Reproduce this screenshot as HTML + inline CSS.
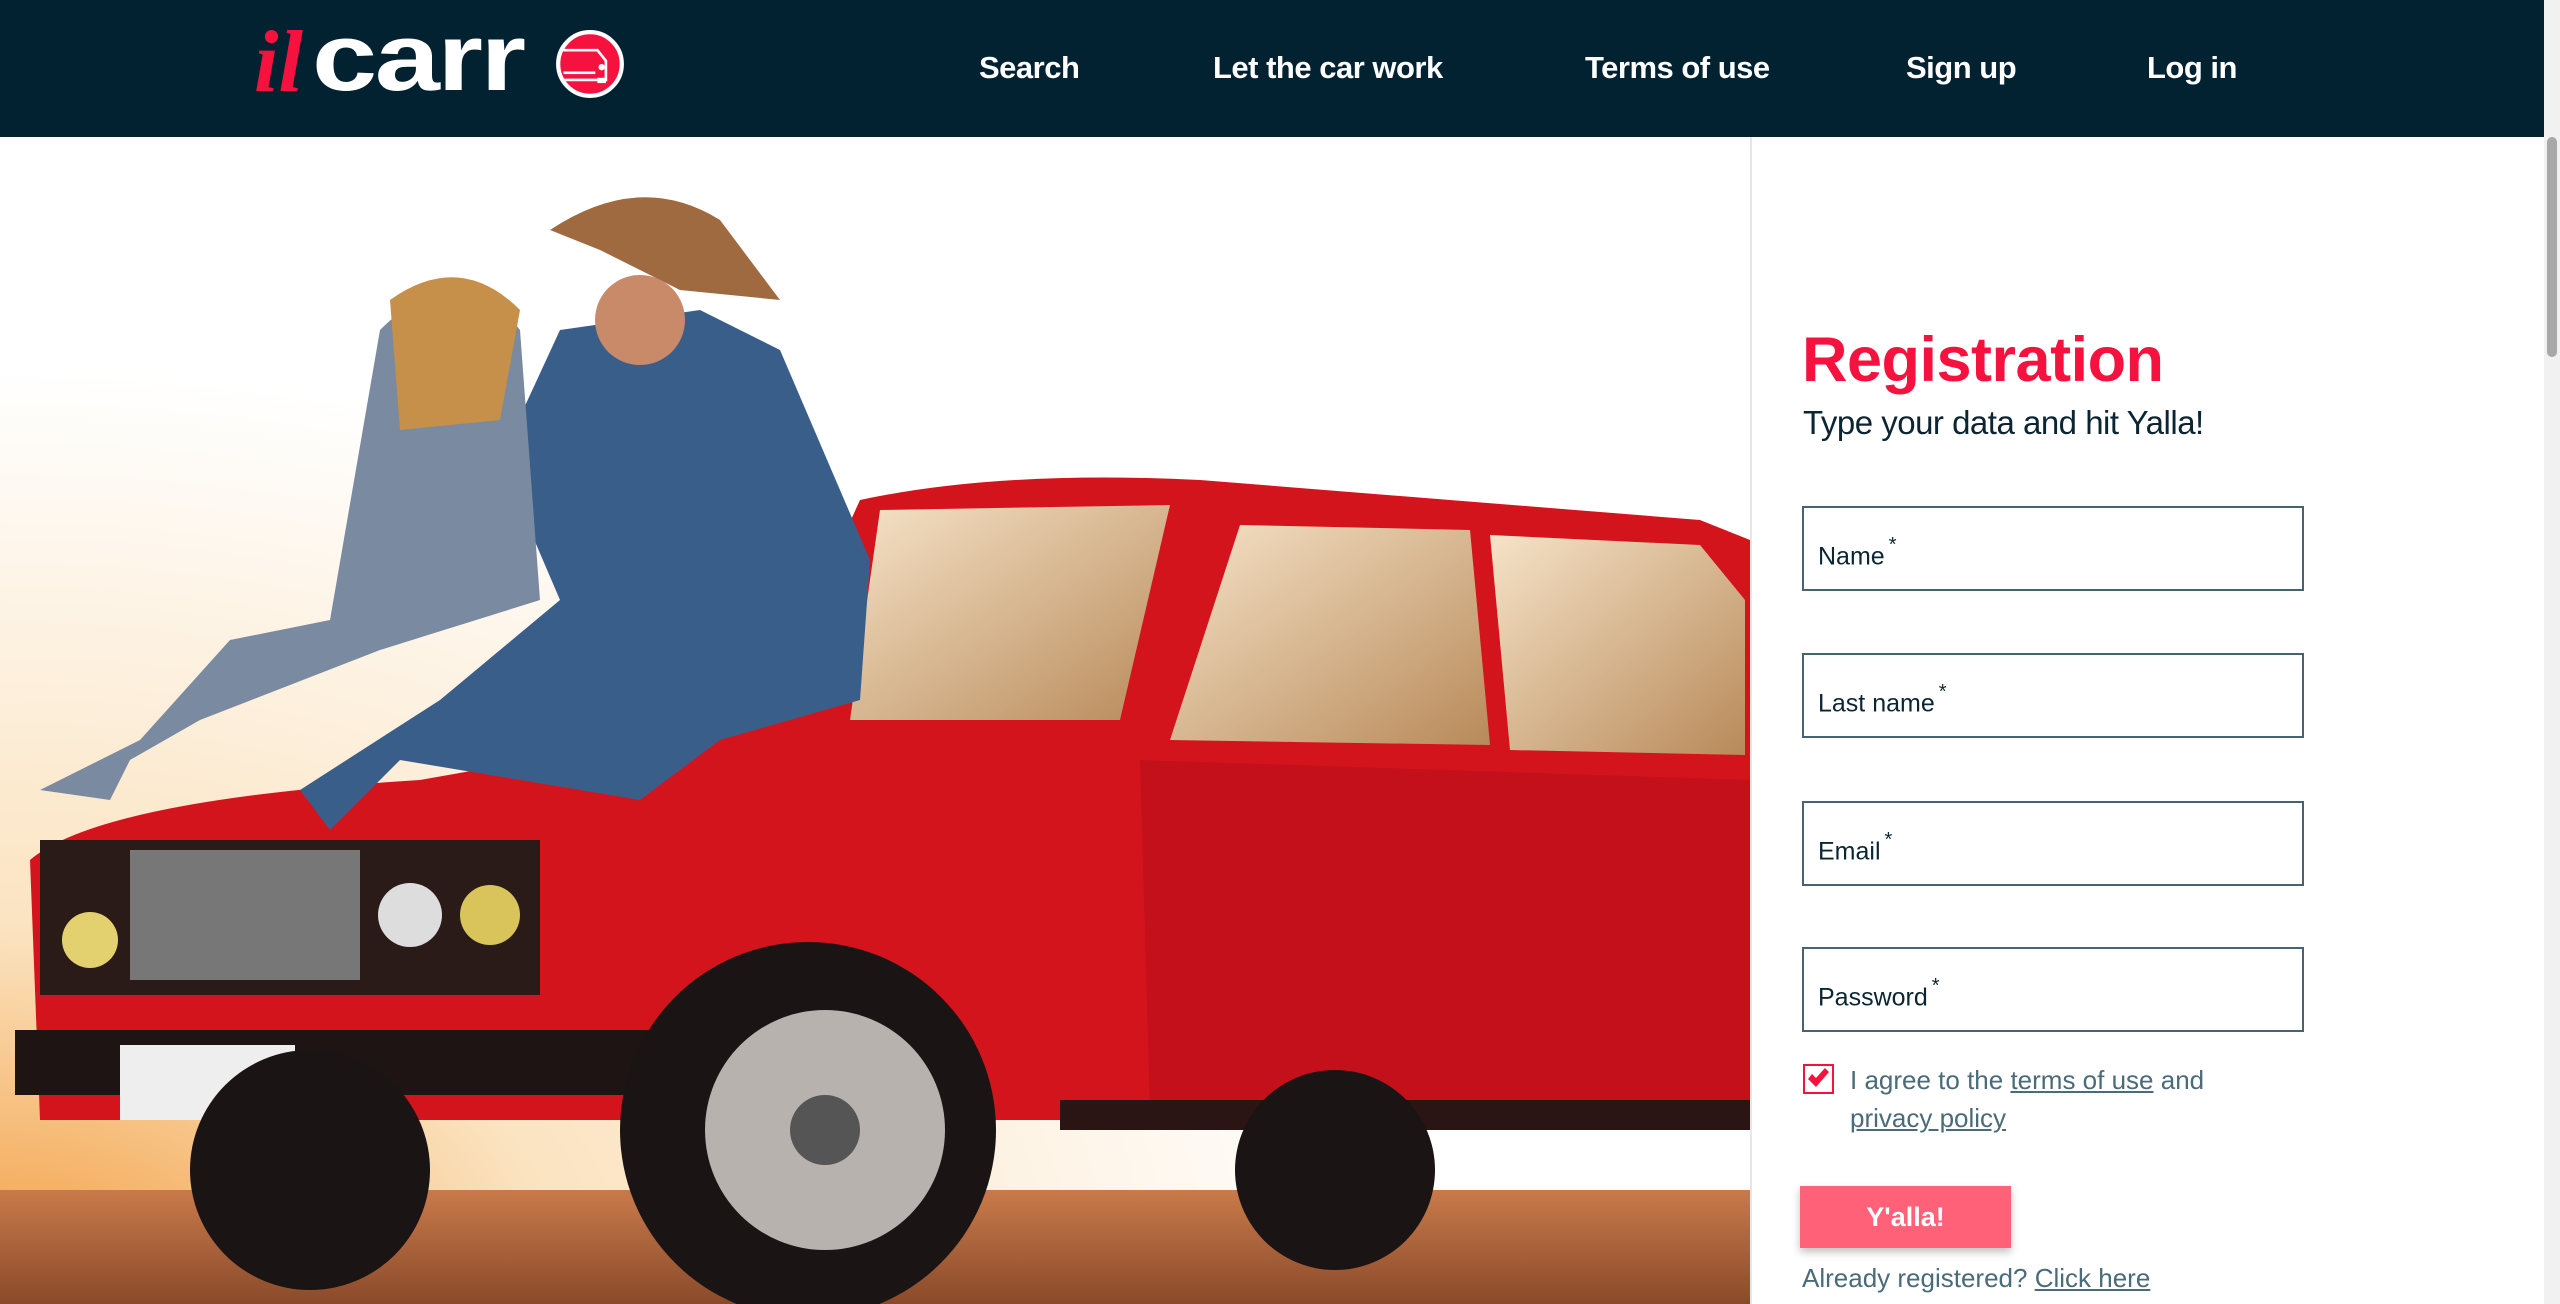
<!DOCTYPE html>
<html><head><meta charset="utf-8"><style>
*{margin:0;padding:0;box-sizing:border-box}
body{width:2560px;height:1304px;overflow:hidden;background:#fff;font-family:"Liberation Sans",sans-serif;position:relative}
.hdr{position:absolute;left:0;top:0;width:2544px;height:137px;background:#022232}
.nav{position:absolute;top:50px;color:#fff;font-size:31px;font-weight:bold;letter-spacing:-0.5px}
.photo{position:absolute;left:0;top:137px;width:1750px;height:1167px;overflow:hidden}
.vline{position:absolute;left:1750px;top:137px;width:2px;height:1167px;background:#e6e6e6}
.sb{position:absolute;left:2544px;top:0;width:16px;height:1304px;background:#f1f1f1}
.sbt{position:absolute;left:2547px;top:137px;width:10px;height:220px;background:#a8a8a8;border-radius:5px}
h1{position:absolute;left:1802px;top:324px;font-size:63px;color:#f5123f;font-weight:bold;letter-spacing:-0.5px}
.sub{position:absolute;left:1803px;top:404px;font-size:33px;color:#0b2532;letter-spacing:-0.5px}
.inp{position:absolute;left:1802px;width:502px;height:85px;border:2px solid #46636f}
.inp span{position:absolute;left:14px;bottom:18px;font-size:25px;color:#0b2532}
.inp sup{font-size:20px;position:relative;top:-4px;margin-left:4px}
.cb{position:absolute;left:1803px;top:1064px;width:31px;height:30px;border:2px solid #f5123f}
.txt{position:absolute;left:1850px;font-size:26px;color:#4a6b78}
.txt u{color:#4a6b78}
.btn{position:absolute;left:1800px;top:1186px;width:211px;height:62px;background:#ff6179;color:#fff;font-weight:bold;font-size:27px;text-align:center;line-height:62px;box-shadow:0 4px 8px rgba(0,0,0,.25)}
</style></head><body>
<div class="hdr">
<div style="position:absolute;left:254px;top:19px;line-height:1;font-family:'Liberation Serif',serif;font-style:italic;font-weight:bold;color:#f5123f;font-size:88px">il</div>
<div style="position:absolute;left:312px;top:10px;line-height:1;color:#fff;font-size:96px;font-weight:bold;letter-spacing:-2px;transform:scaleX(1.22);transform-origin:0 0">carr</div>
<svg style="position:absolute;left:555px;top:29px" width="70" height="70" viewBox="0 0 66 66"><circle cx="33" cy="33" r="30" fill="#f5123f" stroke="#fff" stroke-width="4"/><path d="M8 20h32l8 10v18H8" fill="none" stroke="#fff" stroke-width="2.5"/><rect x="8" y="40" width="30" height="2.5" fill="#fff"/><circle cx="44" cy="36" r="3" fill="#fff"/><rect x="40" y="46" width="8" height="5" fill="#fff"/></svg>
<div class="nav" style="left:979px">Search</div>
<div class="nav" style="left:1213px">Let the car work</div>
<div class="nav" style="left:1585px">Terms of use</div>
<div class="nav" style="left:1906px">Sign up</div>
<div class="nav" style="left:2147px">Log in</div>
</div>
<div class="photo">
<svg width="1750" height="1167" viewBox="0 137 1750 1167">
<defs>
<radialGradient id="glow" cx="0" cy="1" r="0.8"><stop offset="0" stop-color="#f29a3a"/><stop offset="0.4" stop-color="#fbe3c0"/><stop offset="1" stop-color="#ffffff"/></radialGradient>
<linearGradient id="gr" x1="0" y1="0" x2="0" y2="1"><stop offset="0" stop-color="#c97a4a"/><stop offset="1" stop-color="#8a4a2a"/></linearGradient>
<linearGradient id="win" x1="0" y1="0" x2="1" y2="1"><stop offset="0" stop-color="#f6e3c8"/><stop offset="1" stop-color="#b88a5a"/></linearGradient>
</defs>
<rect x="0" y="137" width="1750" height="1167" fill="url(#glow)"/>
<rect x="0" y="1190" width="1750" height="114" fill="url(#gr)"/>
<path d="M860 500 Q1000 470 1200 480 L1700 520 L1750 540 L1750 1120 L40 1120 L30 860 Q100 800 420 780 L760 720 Z" fill="#d3141c"/>
<path d="M880 510 L1170 505 L1120 720 L850 720 Z" fill="url(#win)"/>
<path d="M1240 525 L1470 530 L1490 745 L1170 740 Z" fill="url(#win)"/>
<path d="M1490 535 L1700 545 L1745 600 L1745 755 L1510 750 Z" fill="url(#win)"/>
<path d="M1140 760 L1750 780 L1750 1110 L1150 1110 Z" fill="#c3101a"/>
<rect x="40" y="840" width="500" height="155" fill="#2a1a18"/>
<rect x="130" y="850" width="230" height="130" fill="#777"/>
<circle cx="90" cy="940" r="28" fill="#e3d170"/><circle cx="410" cy="915" r="32" fill="#ddd"/><circle cx="490" cy="915" r="30" fill="#d8c45a"/>
<rect x="15" y="1030" width="720" height="65" fill="#1e1414"/>
<rect x="120" y="1045" width="175" height="75" fill="#eee"/>
<rect x="1060" y="1100" width="690" height="30" fill="#2a1414"/>
<circle cx="808" cy="1130" r="188" fill="#1a1414"/><circle cx="825" cy="1130" r="120" fill="#b8b2ae"/><circle cx="825" cy="1130" r="35" fill="#555"/>
<circle cx="310" cy="1170" r="120" fill="#1a1414"/>
<circle cx="1335" cy="1170" r="100" fill="#1a1414"/>
<path d="M560 330 L700 310 L780 350 L870 560 L860 700 L720 740 L640 800 L400 760 L330 830 L300 790 L440 700 L560 600 L500 460 Z" fill="#3a5e8a"/>
<path d="M550 230 Q640 170 720 220 L780 300 L680 290 L600 250 Z" fill="#a06a40"/>
<circle cx="640" cy="320" r="45" fill="#c98a6a"/>
<path d="M380 330 Q460 250 520 330 L540 600 L380 650 L200 720 L130 760 L110 800 L40 790 L140 740 L230 640 L330 620 Z" fill="#7a8aa0"/>
<circle cx="460" cy="335" r="45" fill="#d6a080"/>
<path d="M390 300 Q460 250 520 310 L500 420 L400 430 Z" fill="#c6904a"/>
</svg>
</div>
<div class="vline"></div>
<div class="sb"></div><div class="sbt"></div>
<h1>Registration</h1>
<div class="sub">Type your data and hit Yalla!</div>
<div class="inp" style="top:506px"><span>Name<sup>*</sup></span></div>
<div class="inp" style="top:653px"><span>Last name<sup>*</sup></span></div>
<div class="inp" style="top:801px"><span>Email<sup>*</sup></span></div>
<div class="inp" style="top:947px"><span>Password<sup>*</sup></span></div>
<div class="cb"><svg width="27" height="26" viewBox="0 0 27 26"><path d="M3 13 L11 21 L24 6 L20 2 L11 12 L7 8 Z" fill="#f5123f"/></svg></div>
<div class="txt" style="top:1065px">I agree to the <u>terms of use</u> and</div>
<div class="txt" style="top:1103px"><u>privacy policy</u></div>
<div class="btn">Y'alla!</div>
<div class="txt" style="left:1802px;top:1263px">Already registered? <u>Click here</u></div>
</body></html>
